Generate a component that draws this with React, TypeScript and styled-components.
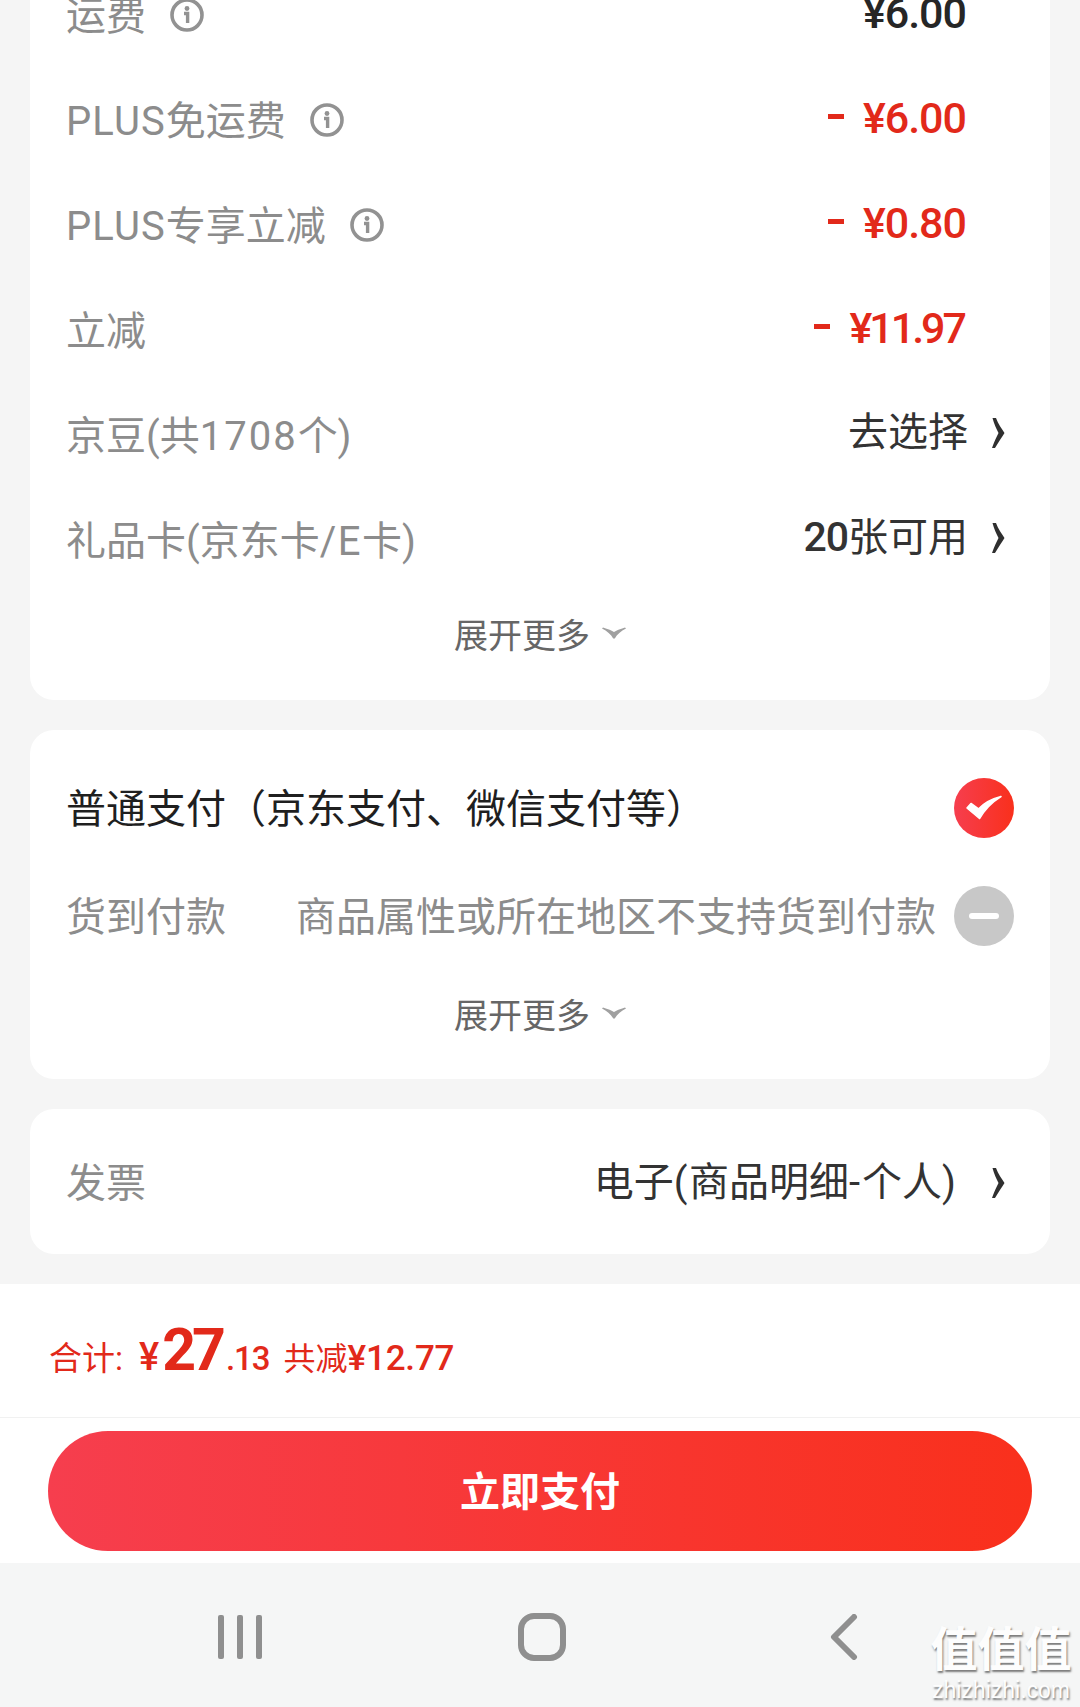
import React from "react";
import styled, { createGlobalStyle } from "styled-components";

const GlobalStyle = createGlobalStyle`
  html, body {
    margin: 0;
    padding: 0;
    background: #f5f5f5;
  }
  * {
    box-sizing: border-box;
  }
`;

const FONT = `Roboto, "Noto Sans CJK SC", sans-serif`;

const Page = styled.div`
  width: 1080px;
  height: 1707px;
  overflow: hidden;
  display: flex;
  flex-direction: column;
  position: relative;
  font-family: ${FONT};
  background: #f5f5f5;
`;

const Scroller = styled.div`
  display: flex;
  flex-direction: column;
  gap: 30px;
  padding: 0 30px 30px;
  margin-top: -38px;
`;

const Card = styled.section<{ $top?: number; $bottom?: number }>`
  background: #fff;
  border-radius: 24px;
  padding: ${(p) => p.$top ?? 0}px 0 ${(p) => p.$bottom ?? 0}px;
`;

const Row = styled.div<{ $height?: number; $right?: number }>`
  height: ${(p) => p.$height ?? 105}px;
  display: flex;
  align-items: center;
  justify-content: space-between;
  padding: 0 ${(p) => p.$right ?? 84}px 0 36px;
`;

const LabelGroup = styled.div`
  display: flex;
  align-items: center;
  gap: 24px;
`;

const Label = styled.span<{ $dark?: boolean }>`
  font-size: 40px;
  font-weight: 400;
  line-height: 56px;
  margin-top: 4px;
  color: ${(p) => (p.$dark ? "#1f1f1f" : "#8c8c8c")};
  white-space: nowrap;
`;

const Latin = styled.span<{ $spacing: number }>`
  letter-spacing: ${(p) => p.$spacing}px;
`;

const Price = styled.span<{ $red?: boolean; $tight?: boolean }>`
  font-size: 43px;
  font-weight: 500;
  line-height: 50px;
  margin-top: -4px;
  margin-right: ${(p) => (p.$tight ? "2px" : "0")};
  letter-spacing: ${(p) => (p.$tight ? "-3px" : "-1px")};
  color: ${(p) => (p.$red ? "#e2291a" : "#262626")};
  white-space: nowrap;
`;

const Minus = styled.span`
  display: inline-block;
  width: 16px;
  height: 5px;
  background: #e2291a;
  margin-right: 19px;
  vertical-align: 14px;
`;

const LinkValue = styled.div<{ $gap?: number; $lift?: number }>`
  display: flex;
  align-items: center;
  gap: ${(p) => p.$gap ?? 23}px;
  margin-top: ${(p) => p.$lift ?? -4}px;
`;

const ValueText = styled.span`
  font-size: 40px;
  font-weight: 400;
  line-height: 56px;
  color: #333;
  white-space: nowrap;

  b {
    font-weight: 500;
    font-size: 41px;
    letter-spacing: -1px;
  }
`;

const PayNote = styled.span`
  font-size: 40px;
  font-weight: 400;
  line-height: 56px;
  margin-top: 4px;
  color: #8c8c8c;
  white-space: nowrap;
  margin-left: auto;
  margin-right: 18px;
`;

const ExpandRow = styled.div<{ $height: number }>`
  height: ${(p) => p.$height}px;
  display: flex;
  align-items: center;
  justify-content: center;
  gap: 12px;
  padding-bottom: 4px;
  font-size: 34px;
  font-weight: 400;
  color: #666;
`;

const Summary = styled.div`
  height: 134px;
  background: #fff;
  border-bottom: 1px solid #f1f1f1;
  display: flex;
  align-items: baseline;
  padding: 31px 0 0 49px;
  color: #e2291a;
  white-space: nowrap;
`;

const SumLabel = styled.span`
  font-size: 33px;
  font-weight: 400;
  line-height: 70px;
`;

const SumYen = styled.span`
  font-size: 38px;
  font-weight: 500;
  margin-left: 16px;
  margin-right: 3px;
`;

const SumInt = styled.span`
  font-size: 59px;
  font-weight: 700;
  letter-spacing: -4px;
`;

const SumDecimal = styled.span`
  font-size: 33px;
  font-weight: 500;
  margin-left: 4px;
  letter-spacing: -1px;
`;

const SumSaved = styled.span`
  font-size: 32px;
  font-weight: 400;
  margin-left: 14px;

  b {
    font-size: 35px;
    font-weight: 500;
    letter-spacing: -0.2px;
  }
`;

const ButtonBar = styled.div`
  height: 145px;
  background: #fff;
  padding: 13px 48px 12px;
`;

const PayButton = styled.button`
  width: 100%;
  height: 120px;
  border: 0;
  border-radius: 60px;
  background: linear-gradient(90deg, #f63e4e 0%, #f9301c 100%);
  color: #fff;
  font-family: ${FONT};
  font-size: 40px;
  font-weight: 700;
  padding: 0 0 4px;
`;

const NavBar = styled.nav`
  flex: 1;
  background: #f5f6f6;
  display: flex;
  align-items: center;
  justify-content: center;
  padding: 3px 0 0 4px;
`;

const NavSlot = styled.div`
  width: 302px;
  display: flex;
  justify-content: center;
`;

const Watermark = styled.div`
  position: absolute;
  right: 7px;
  bottom: 5px;
  width: 144px;
  display: flex;
  flex-direction: column;
  align-items: center;
  color: #fdfdfd;
  text-shadow: 1px 2px 2px rgba(0, 0, 0, 0.5);
  pointer-events: none;
`;

const WatermarkMark = styled.div`
  font-size: 47px;
  line-height: 56px;
  font-weight: 700;
  white-space: nowrap;
`;

const WatermarkSite = styled.div`
  font-size: 23px;
  line-height: 24px;
  font-family: "Liberation Sans", sans-serif;
`;

const InfoIcon = () => (
  <svg width="34" height="34" viewBox="0 0 34 34" fill="none">
    <circle cx="17" cy="17" r="15" stroke="#929292" strokeWidth="3.6" />
    <circle cx="17" cy="10.5" r="2.4" fill="#929292" />
    <path d="M14 15.5H17.6V25" stroke="#929292" strokeWidth="3.4" />
  </svg>
);

const Chevron = () => (
  <svg width="16" height="32" viewBox="0 0 16 32">
    <path d="M1.5 1L5 1C7 7 11 12 13.5 16C11 20 7.5 25 4 31L1 31C3 25 5.5 20 7.5 16C5.5 12 3 7 1.5 1Z" fill="#2f2f2f" />
  </svg>
);

const ExpandIcon = () => (
  <svg width="24" height="12" viewBox="0 0 24 12">
    <path d="M0 1.5L1 0.5C6 2 10 3.5 12 5C14 3.5 18 2 23 0.5L24 1.5C19 4 15 7.5 12.8 11.5L11.2 11.5C9 7.5 5 4 0 1.5Z" fill="#a0a0a0" />
  </svg>
);

const CheckedRadio = () => (
  <svg width="60" height="60" viewBox="0 0 60 60">
    <defs>
      <linearGradient id="radioRed" x1="0" x2="1" y1="0" y2="0">
        <stop offset="0" stopColor="#f63e4e" />
        <stop offset="1" stopColor="#f9301c" />
      </linearGradient>
    </defs>
    <circle cx="30" cy="30" r="30" fill="url(#radioRed)" />
    <path d="M13 30L17 25.5L24.5 31C30 25 37 21 47 18.5C38 24 31 31 25.5 40.5Z" fill="#fff" stroke="#fff" strokeWidth="1.6" strokeLinejoin="round" />
  </svg>
);

const DisabledRadio = () => (
  <svg width="60" height="60" viewBox="0 0 60 60">
    <circle cx="30" cy="30" r="30" fill="#c8c8c8" />
    <rect x="15" y="27" width="30" height="6" rx="3" fill="#fff" />
  </svg>
);

const NavRecents = () => (
  <svg width="46" height="46" viewBox="0 0 46 46" fill="#8f8f8f">
    <rect x="1" y="1" width="6" height="44" rx="2" />
    <rect x="20" y="1" width="6" height="44" rx="2" />
    <rect x="39" y="1" width="6" height="44" rx="2" />
  </svg>
);

const NavHome = () => (
  <svg width="48" height="48" viewBox="0 0 48 48" fill="none">
    <rect x="3" y="3" width="42" height="42" rx="13" stroke="#8f8f8f" strokeWidth="6" />
  </svg>
);

const NavBack = () => (
  <svg width="28" height="46" viewBox="0 0 28 46" fill="none">
    <path d="M24 3L4 23L24 43" stroke="#8f8f8f" strokeWidth="6" strokeLinecap="round" strokeLinejoin="round" />
  </svg>
);

const feeRows = [
  { key: "freight", label: "运费", info: true, amount: "¥6.00", red: false, tight: false },
  {
    key: "plusFreight",
    label: (
      <>
        <Latin $spacing={1.1}>PLUS</Latin>免运费
      </>
    ),
    info: true,
    amount: "¥6.00",
    red: true,
    tight: false,
  },
  {
    key: "plusOff",
    label: (
      <>
        <Latin $spacing={1.1}>PLUS</Latin>专享立减
      </>
    ),
    info: true,
    amount: "¥0.80",
    red: true,
    tight: false,
  },
  { key: "off", label: "立减", info: false, amount: "¥11.97", red: true, tight: true },
];

export default function App() {
  return (
    <>
      <GlobalStyle />
      <Page>
        <Scroller>
          <Card $bottom={22}>
            {feeRows.map((row) => (
              <Row key={row.key}>
                <LabelGroup>
                  <Label>{row.label}</Label>
                  {row.info && <InfoIcon />}
                </LabelGroup>
                <Price $red={row.red} $tight={row.tight}>
                  {row.red && <Minus />}
                  {row.amount}
                </Price>
              </Row>
            ))}
            <Row $right={43}>
              <Label>
                京豆(共<Latin $spacing={2}>1708</Latin>个)
              </Label>
              <LinkValue>
                <ValueText>去选择</ValueText>
                <Chevron />
              </LinkValue>
            </Row>
            <Row $right={43}>
              <Label>
                礼品卡(京东卡<Latin $spacing={1.5}>/E</Latin>卡)
              </Label>
              <LinkValue>
                <ValueText>
                  <b>20</b>张可用
                </ValueText>
                <Chevron />
              </LinkValue>
            </Row>
            <ExpandRow $height={86}>
              展开更多
              <ExpandIcon />
            </ExpandRow>
          </Card>

          <Card $top={24} $bottom={19}>
            <Row $height={108} $right={36}>
              <Label $dark>普通支付（京东支付、微信支付等）</Label>
              <CheckedRadio />
            </Row>
            <Row $height={108} $right={36}>
              <Label>货到付款</Label>
              <PayNote>商品属性或所在地区不支持货到付款</PayNote>
              <DisabledRadio />
            </Row>
            <ExpandRow $height={90}>
              展开更多
              <ExpandIcon />
            </ExpandRow>
          </Card>

          <Card>
            <Row $height={145} $right={43}>
              <Label>发票</Label>
              <LinkValue $gap={35} $lift={3}>
                <ValueText>
                  电子<Latin $spacing={1.5}>(</Latin>商品明细<Latin $spacing={2}>-</Latin>个人)
                </ValueText>
                <Chevron />
              </LinkValue>
            </Row>
          </Card>
        </Scroller>

        <Summary>
          <SumLabel>合计:</SumLabel>
          <SumYen>¥</SumYen>
          <SumInt>27</SumInt>
          <SumDecimal>.13</SumDecimal>
          <SumSaved>
            共减<b>¥12.77</b>
          </SumSaved>
        </Summary>

        <ButtonBar>
          <PayButton>立即支付</PayButton>
        </ButtonBar>

        <NavBar>
          <NavSlot>
            <NavRecents />
          </NavSlot>
          <NavSlot>
            <NavHome />
          </NavSlot>
          <NavSlot>
            <NavBack />
          </NavSlot>
        </NavBar>

        <Watermark>
          <WatermarkMark>值值值</WatermarkMark>
          <WatermarkSite>zhizhizhi.com</WatermarkSite>
        </Watermark>
      </Page>
    </>
  );
}
